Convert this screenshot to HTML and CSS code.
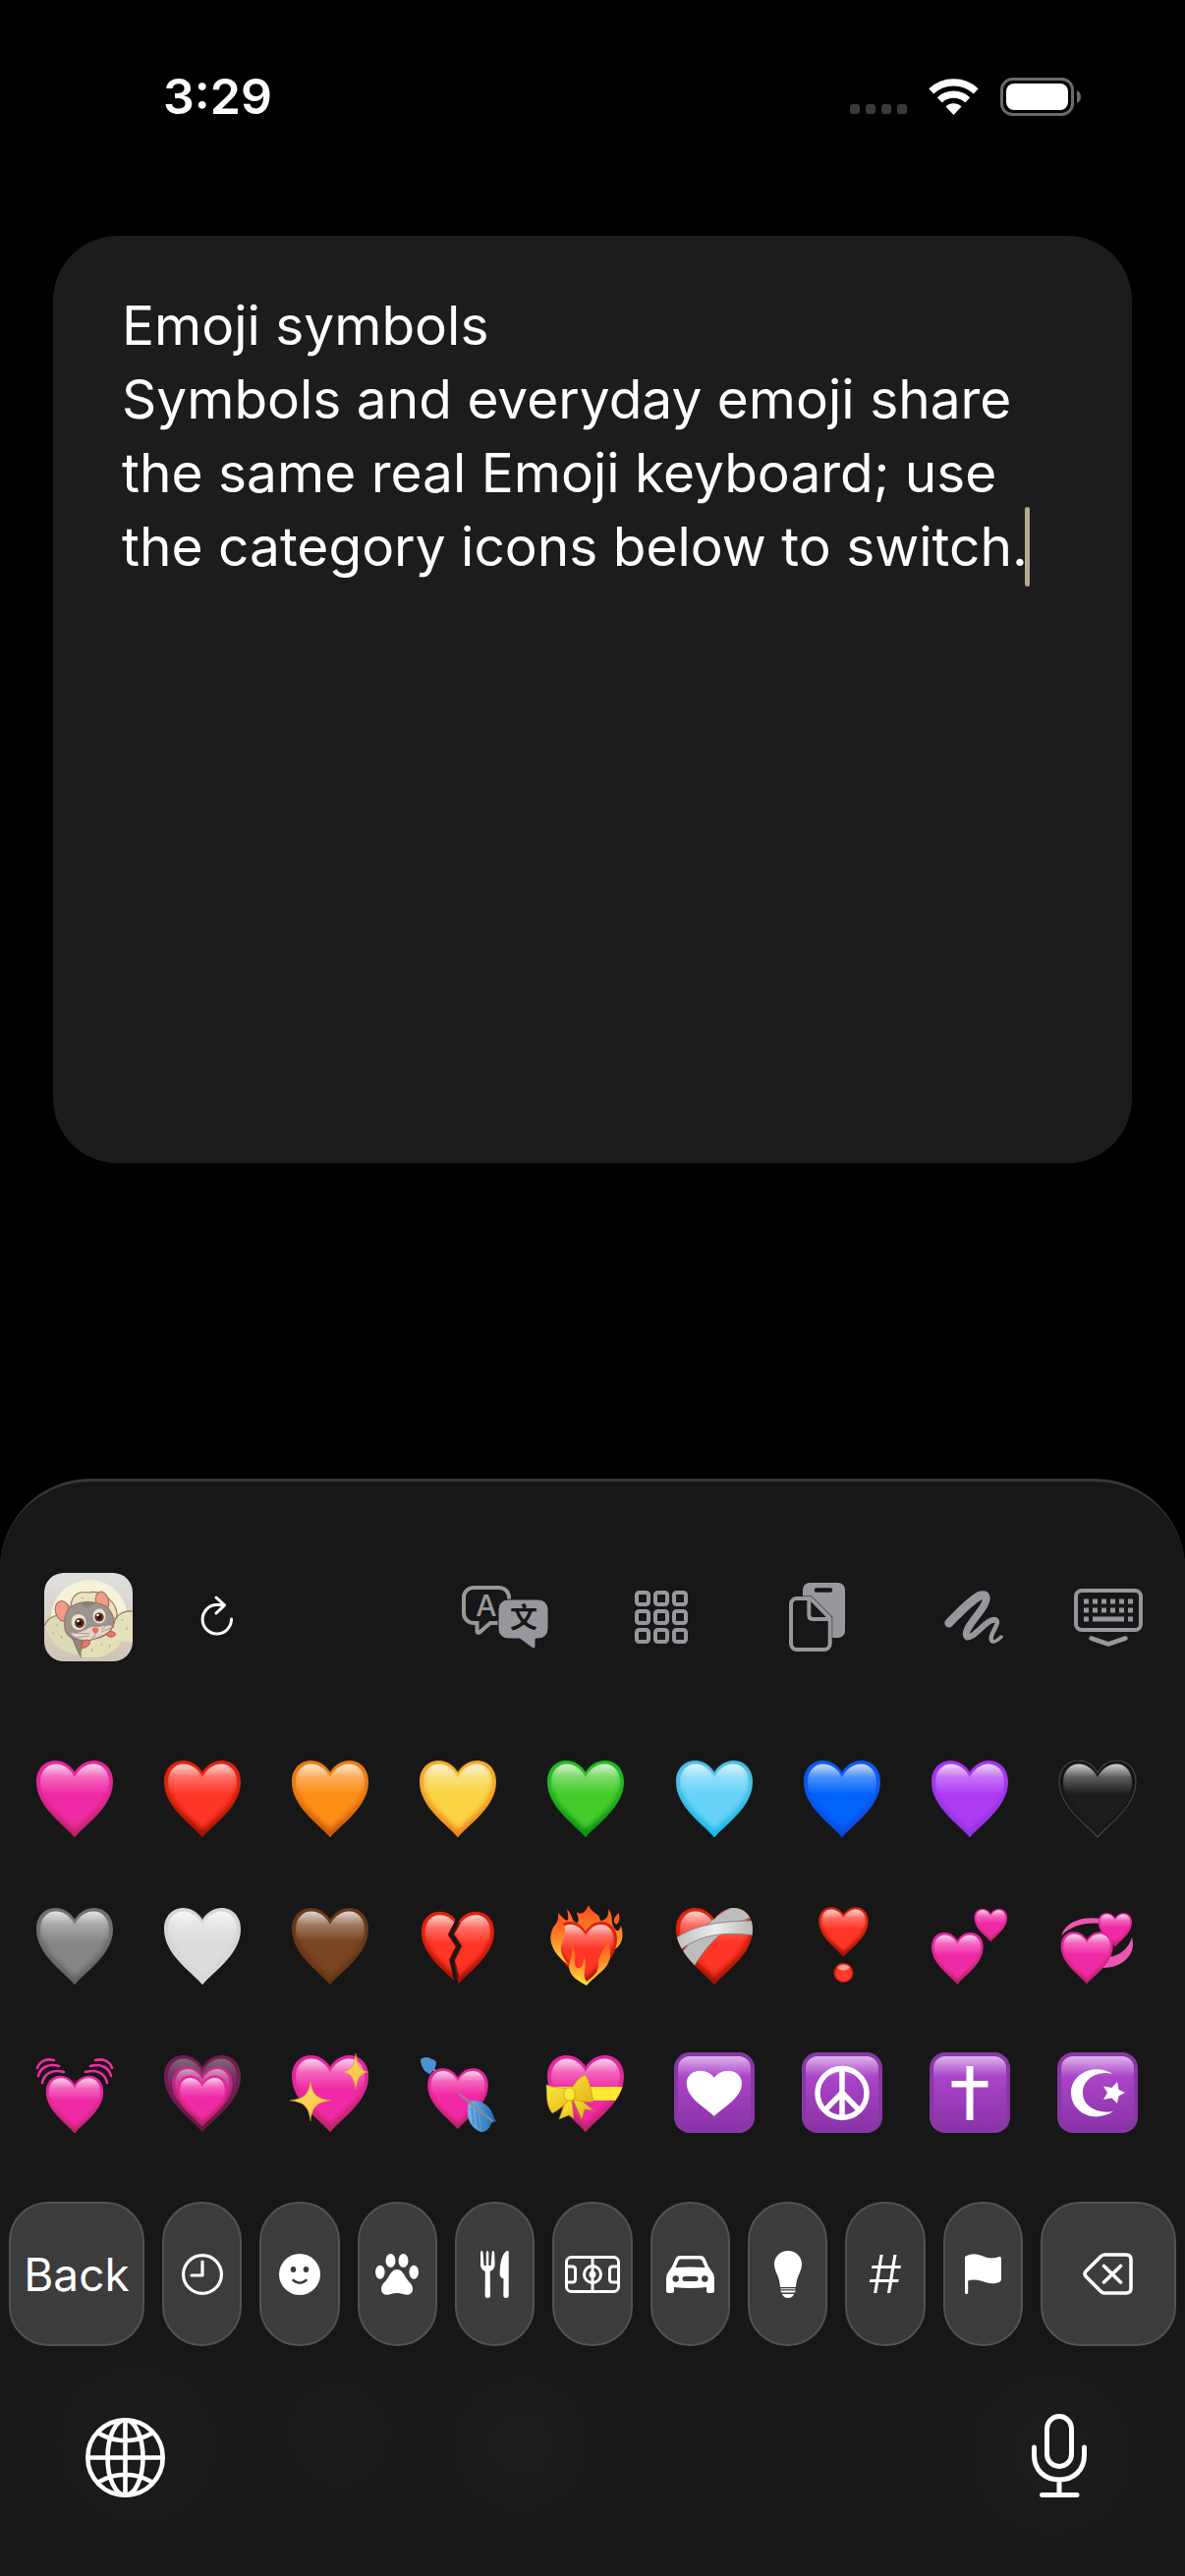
FILE: index.html
```
<!DOCTYPE html>
<html lang="en">
<head>
    <meta charset="UTF-8">
    <meta name="viewport" content="width=device-width, initial-scale=1.0">
    <title>Emoji symbols</title>
    <link rel="stylesheet" href="styles.css">
</head>
<body>
    <!-- Shared emoji shapes -->
    <svg class="defs" aria-hidden="true">
        <defs>
            <linearGradient id="gloss" x1="0" y1="0" x2="0" y2="1">
                <stop offset="0" stop-color="#fff" stop-opacity=".8"/>
                <stop offset=".2" stop-color="#fff" stop-opacity=".28"/>
                <stop offset=".45" stop-color="#fff" stop-opacity="0"/>
            </linearGradient>
            <linearGradient id="fade" x1="0" y1="0" x2="0" y2="1">
                <stop offset=".35" stop-color="#000"/>
                <stop offset="1" stop-color="#fff"/>
            </linearGradient>
            <mask id="lower"><rect width="84" height="84" fill="url(#fade)"/></mask>
            <filter id="soft" x="-10%" y="-10%" width="120%" height="120%"><feGaussianBlur stdDeviation="2.500"/></filter>
            <linearGradient id="tile-fill" x1="0" y1="0" x2="0" y2="1">
                <stop offset="0" stop-color="#dfb4ec"/>
                <stop offset=".12" stop-color="#c883dc"/>
                <stop offset=".28" stop-color="#aa43c8"/>
                <stop offset="1" stop-color="#8a33a8"/>
            </linearGradient>
            <linearGradient id="flame" x1="0" y1="0" x2="0" y2="1">
                <stop offset="0" stop-color="#ff4a1c"/>
                <stop offset=".5" stop-color="#ff8a2a"/>
                <stop offset="1" stop-color="#ffe63c"/>
            </linearGradient>
            <linearGradient id="gold" x1="0" y1="0" x2="1" y2="1">
                <stop offset="0" stop-color="#ffe874"/>
                <stop offset="1" stop-color="#f5b52e"/>
            </linearGradient>
            <linearGradient id="ribbon" x1="0" y1="0" x2="1" y2="1">
                <stop offset="0" stop-color="#fff13a"/>
                <stop offset="1" stop-color="#dfa916"/>
            </linearGradient>
            <linearGradient id="bandage" x1="0" y1="0" x2="1" y2="0">
                <stop offset="0" stop-color="#bdbdbd"/>
                <stop offset=".5" stop-color="#ededed"/>
                <stop offset="1" stop-color="#b4b4b4"/>
            </linearGradient>
            <linearGradient id="feather" x1="0" y1="0" x2="1" y2="0">
                <stop offset="0" stop-color="#7ab8ea"/>
                <stop offset="1" stop-color="#1667b4"/>
            </linearGradient>
            <linearGradient id="avatar-bg" x1="0" y1="0" x2="0" y2="1">
                <stop offset="0" stop-color="#dfe1df"/>
                <stop offset="1" stop-color="#d0c3b4"/>
            </linearGradient>
            <path id="heart-shape" d="M42 82C30 68 3 51 3 25.500C3 13 11 4 22.500 4C31 4 38 9 42 16C46 9 53 4 61.500 4C73 4 81 13 81 25.500C81 51 54 68 42 82Z"/>
            <clipPath id="heart-clip"><use href="#heart-shape"/></clipPath>
        </defs>
        <symbol id="heart" viewBox="0 0 84 84">
            <use href="#heart-shape" class="heart-edge"/>
            <use href="#heart-shape" class="heart-tip" mask="url(#lower)"/>
            <path class="heart-fill" filter="url(#soft)" d="M42 74C30 62 8 48 8 26C8 16 14 9 23 9C31 9 38 13 42 21C46 13 53 9 61 9C70 9 76 16 76 26C76 48 54 62 42 74Z"/>
            <path fill="url(#gloss)" d="M42 76C30 64 7 48 7 26C7 15 13.500 7.500 23 7.500C31 7.500 38 13 42 21C46 13 53 7.500 61 7.500C70.500 7.500 77 15 77 26C77 48 54 64 42 76Z"/>
        </symbol>
        <symbol id="tile" viewBox="0 0 84 84">
            <rect x="1" y="1" width="82" height="82" rx="16" fill="#8738a4"/>
            <rect x="5" y="5" width="74" height="75" rx="12" fill="url(#tile-fill)"/>
        </symbol>
    </svg>

    <header class="status-bar">
        <time class="status-time">3:29</time>
        <div class="status-icons">
            <svg width="58" height="38" viewBox="0 0 58 38" role="img" aria-label="No signal">
                <g fill="#3a3a3a">
                    <rect y="27" width="10" height="10" rx="3"/>
                    <rect x="16" y="27" width="10" height="10" rx="3"/>
                    <rect x="32" y="27" width="10" height="10" rx="3"/>
                    <rect x="48" y="27" width="10" height="10" rx="3"/>
                </g>
            </svg>
            <svg width="51" height="38" viewBox="0 0 51 38" role="img" aria-label="Wi-Fi">
                <g fill="none" stroke="#fff" stroke-width="7.200">
                    <path d="M2.800 13.800A33.200 33.200 0 0 1 48.200 13.800"/>
                    <path d="M11.300 22.800A20.800 20.800 0 0 1 39.700 22.800"/>
                </g>
                <path fill="#fff" d="M25.500 38L17.500 29.500A11.700 11.700 0 0 1 33.500 29.500Z"/>
            </svg>
            <svg width="83" height="39" viewBox="0 0 83 39" role="img" aria-label="Battery full">
                <rect x="1.500" y="1.500" width="72" height="36" rx="11" fill="none" stroke="#6b6b6b" stroke-width="3"/>
                <rect x="6" y="6" width="63" height="27" rx="8" fill="#fff"/>
                <path d="M78 13Q82 15 82 19.500T78 26Z" fill="#6b6b6b"/>
            </svg>
        </div>
    </header>

    <main class="editor">
        <textarea class="editor-text" aria-label="Note" spellcheck="false">Emoji symbols
Symbols and everyday emoji share the same real Emoji keyboard; use the category icons below to switch.</textarea>
        <span class="caret"></span>
    </main>

    <section class="keyboard" aria-label="Emoji keyboard">
        <div class="toolbar">
            <button class="avatar" type="button" aria-label="Profile">
                <svg width="90" height="90" viewBox="0 0 90 90">
                    <rect width="90" height="90" fill="url(#avatar-bg)"/>
                    <circle cx="46" cy="46" r="39" fill="#f6f1d8"/>
                    <g stroke="#9c7263" stroke-width="1.200">
                        <path fill="#e8e4c0" d="M27 34C28 22 35 18 46 20C58 17 76 30 74 46L40 50Z"/>
                        <path fill="#dcdab8" d="M0 54C4 43 14 40 23 46C26 58 28 70 38 84C20 82 8 74 4 62Z" stroke="none"/>
                        <path fill="none" d="M0 54C3 47 8 44 14 43"/>
                        <path fill="#e3e0bd" d="M70 56C71 44 79 38 90 39V70H76Z" stroke="none"/>
                        <path fill="none" d="M70 56C71 44 79 38 90 39"/>
                        <path fill="#8f8782" d="M28 66C32 72 33 80 38 86L46 70Z"/>
                        <ellipse cx="59" cy="29" rx="6.500" ry="10" fill="#f09c88" transform="rotate(-14 59 29)"/>
                        <ellipse cx="19" cy="39" rx="7.500" ry="10.500" fill="#f09c88" transform="rotate(-18 19 39)"/>
                        <path fill="#9b948e" d="M25 36C34 29 46 28 54 31C64 32 70 40 71 50C70 62 58 66 46 69C34 70 23 66 21 57C20 48 21 41 25 36Z"/>
                    </g>
                    <path fill="#8a817a" d="M37 31L43 36L52 31L46 29Z"/>
                    <path fill="#e3d6ca" d="M27 61C38 63 44 55 50 55C58 56 64 52 69 54C67 61 58 65 46 68C38 69 30 66 27 61Z"/>
                    <ellipse cx="35" cy="50" rx="7.500" ry="8" fill="#e9e2cf"/>
                    <ellipse cx="56" cy="44" rx="6.500" ry="7.500" fill="#e9e2cf"/>
                    <circle cx="36" cy="51" r="5" fill="#5d3623"/>
                    <circle cx="56" cy="45" r="4.600" fill="#5d3623"/>
                    <circle cx="36" cy="51" r="2.500" fill="#20120c"/>
                    <circle cx="56" cy="45" r="2.300" fill="#20120c"/>
                    <circle cx="34.500" cy="49" r="1.300" fill="#fff"/>
                    <circle cx="54.500" cy="43" r="1.300" fill="#fff"/>
                    <path fill="#ef6757" d="M48.500 57Q52 54 55.500 57Q55 61 52 62Q49 60 48.500 57Z"/>
                    <path fill="none" stroke="#a5897c" stroke-width=".8" d="M46 62L30 61M46 64L31 66M58 58L68 50M58 60L70 55M52 62Q52 66 48 66"/>
                    <path fill="#e2dfb6" d="M38 86C36 74 46 68 56 67C66 63 74 64 78 70C74 80 60 87 46 86Z"/>
                    <path fill="#e87666" stroke="#a9584c" stroke-width=".8" d="M38 74Q38 69 43 68Q48 69 46 73Q42 77 38 77ZM63 63Q66 58 71 60Q75 64 70 65Q65 66 63 63Z"/>
                    <path stroke="#a9a583" stroke-width="1" d="M48 80l1-3M58 74l1-2M66 76l1-3M12 52l2 2M8 60l2 2M17 64l1 3M38 25l2 1M52 24l2 0M79 47l1 2M84 55l0 3"/>
                </svg>
            </button>
            <button class="refresh" type="button" aria-label="Refresh">
                <svg width="34" height="44" viewBox="0 0 34 44" fill="none" stroke="#fff" stroke-width="3" stroke-linecap="round" stroke-linejoin="round">
                    <path d="M31.500 24A14.700 14.700 0 1 1 16.500 9.600H24M16 2L24.500 9.800L16 18"/>
                </svg>
            </button>
            <div class="tools">
                <button class="tool" type="button" aria-label="Translate">
                    <svg width="88" height="64" viewBox="0 0 88 64">
                        <path d="M38 38H29L18 47.500Q15.500 49 15.500 46V38H12A10 10 0 0 1 2 28V12A10 10 0 0 1 12 2H38A10 10 0 0 1 48 12V20" fill="none" stroke="#98979d" stroke-width="4"/>
                        <text x="25" y="31" class="glyph-latin">A</text>
                        <path d="M47 14H78A10 10 0 0 1 88 24V44A10 10 0 0 1 78 54H75V61Q75 65 71 63L59 54H47A10 10 0 0 1 37 44V24A10 10 0 0 1 47 14Z" fill="#98979d" stroke="#171717"/>
                        <text x="63" y="43" class="glyph-han">文</text>
                    </svg>
                </button>
                <button class="tool" type="button" aria-label="Layouts">
                    <svg width="54" height="54" viewBox="0 0 54 54" fill="none" stroke="#98979d" stroke-width="4">
                        <rect x="2" y="2" width="12" height="12" rx="2.500"/><rect x="21" y="2" width="12" height="12" rx="2.500"/><rect x="40" y="2" width="12" height="12" rx="2.500"/>
                        <rect x="2" y="21" width="12" height="12" rx="2.500"/><rect x="21" y="21" width="12" height="12" rx="2.500"/><rect x="40" y="21" width="12" height="12" rx="2.500"/>
                        <rect x="2" y="40" width="12" height="12" rx="2.500"/><rect x="21" y="40" width="12" height="12" rx="2.500"/><rect x="40" y="40" width="12" height="12" rx="2.500"/>
                    </svg>
                </button>
                <button class="tool" type="button" aria-label="Clipboard">
                    <svg width="57" height="70" viewBox="0 0 57 70">
                        <rect x="14" width="43" height="56" rx="7" fill="#98979d"/>
                        <path d="M28 7.500H42" stroke="#171717" stroke-width="4.400" stroke-linecap="round"/>
                        <path d="M8 16H22L41.700 36V62A6 6 0 0 1 35.700 68H8A6 6 0 0 1 2 62V22A6 6 0 0 1 8 16Z" fill="#171717" stroke="#171717" stroke-width="5"/>
                        <path d="M8 16H22L41.700 36V62A6 6 0 0 1 35.700 68H8A6 6 0 0 1 2 62V22A6 6 0 0 1 8 16ZM20.300 17V33Q20.300 37 24.300 37H41" fill="none" stroke="#98979d" stroke-width="4" stroke-linejoin="round"/>
                    </svg>
                </button>
                <button class="tool" type="button" aria-label="Handwriting">
                    <svg width="60" height="55" viewBox="0 0 60 55" fill="none" stroke="#98979d" stroke-linecap="round" stroke-linejoin="round">
                        <path stroke-width="9" d="M4.800 33C14 24 27 9 37 5"/>
                        <path stroke-width="7.500" d="M37 4.500C44 2 44 8 41 14C36 24 18 41 23.500 46.500"/>
                        <path stroke-width="6" d="M23.500 47C30 50 44 27 52 30"/>
                        <path stroke-width="4.500" d="M52 29.500C59 32 44 46 48.500 51"/>
                        <path stroke-width="3.500" d="M48.500 51.500C51 53 55 50 58 47"/>
                    </svg>
                </button>
                <button class="tool tool-last" type="button" aria-label="Hide keyboard">
                    <svg width="70" height="59" viewBox="0 0 70 59" fill="none" stroke="#98979d">
                        <rect x="2" y="2" width="66" height="40" rx="6" stroke-width="4"/>
                        <path stroke-width="5" stroke-dasharray="5 4" d="M10 13H60M10 22H60"/>
                        <path stroke-width="5" d="M10 31H15M55 31H60M19 31H51"/>
                        <path stroke-width="4.500" stroke-linecap="round" stroke-linejoin="round" d="M17.500 50.500L35 56.500L52.500 50.500"/>
                    </svg>
                </button>
            </div>
        </div>

        <div class="emoji-grid">
            <button class="emoji hot-pink" type="button" aria-label="Pink heart"><svg viewBox="0 0 84 84"><use href="#heart"/></svg></button>
            <button class="emoji red" type="button" aria-label="Red heart"><svg viewBox="0 0 84 84"><use href="#heart"/></svg></button>
            <button class="emoji orange" type="button" aria-label="Orange heart"><svg viewBox="0 0 84 84"><use href="#heart"/></svg></button>
            <button class="emoji yellow" type="button" aria-label="Yellow heart"><svg viewBox="0 0 84 84"><use href="#heart"/></svg></button>
            <button class="emoji green" type="button" aria-label="Green heart"><svg viewBox="0 0 84 84"><use href="#heart"/></svg></button>
            <button class="emoji sky" type="button" aria-label="Light blue heart"><svg viewBox="0 0 84 84"><use href="#heart"/></svg></button>
            <button class="emoji blue" type="button" aria-label="Blue heart"><svg viewBox="0 0 84 84"><use href="#heart"/></svg></button>
            <button class="emoji purple" type="button" aria-label="Purple heart"><svg viewBox="0 0 84 84"><use href="#heart"/></svg></button>
            <button class="emoji black" type="button" aria-label="Black heart"><svg viewBox="0 0 84 84"><use href="#heart"/><use href="#heart-shape" fill="none" stroke="#454443" stroke-width="1.200"/></svg></button>

            <button class="emoji grey" type="button" aria-label="Grey heart"><svg viewBox="0 0 84 84"><use href="#heart"/></svg></button>
            <button class="emoji white" type="button" aria-label="White heart"><svg viewBox="0 0 84 84"><use href="#heart"/></svg></button>
            <button class="emoji brown" type="button" aria-label="Brown heart"><svg viewBox="0 0 84 84"><use href="#heart"/></svg></button>
            <button class="emoji red" type="button" aria-label="Broken heart">
                <svg viewBox="0 0 84 84">
                    <use href="#heart" width="84" height="84" transform="translate(2 4) scale(.95)"/>
                    <path d="M42 18L41 20L35 31L43 43L36 57L41 76" fill="none" stroke="#8e1008" stroke-width="6"/>
                    <path d="M42 5L41 18L35 31L43 43L36 57L41 84" fill="none" stroke="#171717" stroke-width="4"/>
                </svg>
            </button>
            <button class="emoji red" type="button" aria-label="Heart on fire">
                <svg viewBox="0 0 84 84">
                    <path fill="url(#flame)" d="M14 9C24 20 26 20 23 5C30 12 27 19 34 19C36 15 33 11 33 8C38 12 42 8 45 1C49 11 56 8 57 17C63 17 66 12 65 5C71 12 67 17 70 22C74 30 76 28 78 22C82 34 78 42 72 46L24 62C10 50 2 38 9 24C12 20 15 17 14 9Z"/>
                    <path fill="#ff5a20" d="M76 9C71 13 69 17 73 21C78 18 76 14 76 9Z"/>
                    <use href="#heart" width="84" height="84" transform="translate(7.600 14.800) scale(.82)"/>
                    <path fill="url(#flame)" d="M14 12C24 23 22 32 18 40C15 49 19 55 25 62C10 52 3 38 9 26C13 20 15 18 14 12Z"/>
                    <path fill="url(#flame)" d="M27 42C35 50 29 57 32 64C38 68 40 61 40 54C45 63 37 71 43 79C51 73 55 69 55 61C54 53 63 45 64 35C69 48 68 59 61 66C54 73 48 77 43 83C36 79 25 74 25 63C26 55 30 52 27 42Z"/>
                </svg>
            </button>
            <button class="emoji red" type="button" aria-label="Mending heart">
                <svg viewBox="0 0 84 84">
                    <use href="#heart"/>
                    <g clip-path="url(#heart-clip)">
                        <path fill="#bdbdbd" stroke="#777" stroke-width=".8" d="M10 48C30 24 48 6 64 2L86 13C60 16 38 36 21 64Z"/>
                        <path fill="url(#bandage)" stroke="#777" stroke-width=".8" d="M2 35C22 21 50 17 84 17V32C50 28 30 31 8 46Z"/>
                    </g>
                </svg>
            </button>
            <button class="emoji red" type="button" aria-label="Heart exclamation">
                <svg viewBox="0 0 84 84">
                    <use href="#heart" width="84" height="84" transform="translate(16.400 .700) scale(.645)"/>
                    <circle cx="43.500" cy="70" r="10" fill="#d81c0c"/>
                    <circle cx="43.500" cy="70.500" r="8" fill="#ff3b2c"/>
                    <ellipse cx="43.500" cy="64.500" rx="6" ry="3" fill="#fff" opacity=".5"/>
                </svg>
            </button>
            <button class="emoji hot-pink" type="button" aria-label="Two hearts">
                <svg viewBox="0 0 84 84">
                    <use href="#heart" width="84" height="84" transform="translate(1 26.400) scale(.675)"/>
                    <use href="#heart" width="84" height="84" transform="translate(45.200 3) scale(.43)"/>
                </svg>
            </button>
            <button class="emoji hot-pink" type="button" aria-label="Revolving hearts">
                <svg viewBox="0 0 84 84">
                    <path fill="#ec55b4" d="M5 32C10 17 28 12 46 15V20C30 18 16 22 5 32ZM77 34C82 50 68 66 46 65L54 54C66 52 74 44 77 34Z"/>
                    <use href="#heart" width="84" height="84" transform="translate(41.400 7.300) scale(.44)"/>
                    <use href="#heart" width="84" height="84" transform="translate(2.600 25.500) scale(.68)"/>
                </svg>
            </button>

            <button class="emoji hot-pink" type="button" aria-label="Beating heart">
                <svg viewBox="0 0 84 84">
                    <use href="#heart" width="84" height="84" transform="translate(10.500 21.700) scale(.75)"/>
                    <path fill="none" stroke="#f02ca4" stroke-width="2.600" stroke-linecap="round" d="M4 17C6 10 13 7 21 9M5 25C7 16 16 12 26 15M9 32C11 22 20 18 31 21M80 17C78 10 71 7 63 9M79 25C77 16 68 12 58 15M75 32C73 22 64 18 53 21"/>
                </svg>
            </button>
            <button class="emoji hot-pink" type="button" aria-label="Growing heart">
                <svg viewBox="0 0 84 84">
                    <use href="#heart" opacity=".45"/>
                    <use href="#heart" width="84" height="84" transform="translate(8.800 12) scale(.79)" opacity=".65"/>
                    <use href="#heart" width="84" height="84" transform="translate(14.700 22) scale(.65)"/>
                </svg>
            </button>
            <button class="emoji hot-pink" type="button" aria-label="Sparkling heart">
                <svg viewBox="0 0 84 84">
                    <use href="#heart"/>
                    <path fill="url(#gold)" stroke="#c9853a" stroke-width=".5" d="M22 30C24 44 28 48 43 50C28 52 24 56 22 71C20 56 16 52 1 50C16 48 20 44 22 30ZM68 2C70 15 72 19 81 21C72 23 70 27 68 39C66 27 64 23 55 21C64 19 66 15 68 2Z"/>
                </svg>
            </button>
            <button class="emoji hot-pink" type="button" aria-label="Heart with arrow">
                <svg viewBox="0 0 84 84">
                    <path stroke="#8b8b90" stroke-width="2.500" d="M12 13L24 25"/>
                    <path fill="#4b92d4" d="M4 8C9 5 13 6 15 8C20 8 21 12 19 16L14 23C9 22 4 16 4 8Z"/>
                    <use href="#heart" width="84" height="84" transform="translate(8.800 14) scale(.79)"/>
                    <path fill="url(#feather)" d="M53 51C66 48 76 56 79 68L81 71L76 73C74 80 68 84 63 81C54 76 50 68 53 51Z"/>
                    <path fill="none" stroke="#8b8b90" stroke-width="2" d="M43 43L77 71"/>
                    <path fill="none" stroke="#3c82c4" d="M56 57L58 75M61 61L63 79M66 65L68 79"/>
                </svg>
            </button>
            <button class="emoji hot-pink" type="button" aria-label="Heart with ribbon">
                <svg viewBox="0 0 84 84">
                    <use href="#heart"/>
                    <path fill="#ffe92e" clip-path="url(#heart-clip)" d="M0 36H84V50H0Z"/>
                    <path fill="url(#ribbon)" stroke="#b98a10" stroke-width=".6" d="M22 49L15 69L25 65L30 68L28 50ZM29 49L38 69L41 59L50 60L34 47Z"/>
                    <path fill="url(#ribbon)" stroke="#b98a10" stroke-width=".6" d="M25 38C17 37 9 37 2 34C3 44 1 54 8 63C15 60 20 54 26 49ZM27 38C31 33 35 26 42 24C47 33 48 42 50 51C43 52 36 51 29 49Z"/>
                    <rect x="20" y="37" width="11" height="13" rx="5" fill="#ffe935" stroke="#b98a10" stroke-width=".6"/>
                </svg>
            </button>
            <button class="emoji" type="button" aria-label="Heart decoration">
                <svg viewBox="0 0 84 84">
                    <use href="#tile"/>
                    <use href="#heart-shape" fill="#fff" transform="translate(11.600 17.500) scale(.72 .59)"/>
                </svg>
            </button>
            <button class="emoji" type="button" aria-label="Peace symbol">
                <svg viewBox="0 0 84 84">
                    <use href="#tile"/>
                    <g fill="none" stroke="#fff" stroke-width="5.500"><circle cx="42" cy="42.500" r="25"/><path d="M42 18V67M42 42L24.500 60M42 42L59.500 60"/></g>
                </svg>
            </button>
            <button class="emoji" type="button" aria-label="Latin cross">
                <svg viewBox="0 0 84 84">
                    <use href="#tile"/>
                    <path fill="#fff" d="M38.500 15H45.500V30H60.500V36.500H45.500V70H38.500V36.500H23.500V30H38.500Z"/>
                </svg>
            </button>
            <button class="emoji" type="button" aria-label="Star and crescent">
                <svg viewBox="0 0 84 84">
                    <use href="#tile"/>
                    <path fill="#fff" d="M58 23C38 11 15 23 15 42C15 62 38 74 58 61C42 64 27 56 27 42C27 28 42 19 58 23Z"/>
                    <path fill="#fff" d="M62 31L63.500 39L70 42L63.500 45.500L62 53L56.500 47.500L48 49L52 42L48 35.500L56.500 37Z"/>
                </svg>
            </button>
        </div>

        <nav class="categories" aria-label="Categories">
            <button class="key key-wide" type="button">Back</button>
            <button class="key" type="button" aria-label="Recent">
                <svg width="42" height="42" viewBox="0 0 42 42" fill="none" stroke="#fff" stroke-width="3.200"><circle cx="21" cy="21" r="19.400"/><path stroke-linecap="round" stroke-linejoin="round" d="M21 8V22H10"/></svg>
            </button>
            <button class="key" type="button" aria-label="Smileys">
                <svg width="42" height="42" viewBox="0 0 42 42"><circle cx="21" cy="21" r="21" fill="#fff"/><ellipse cx="14.500" cy="16" rx="2.800" ry="3" fill="#3c3c3c"/><ellipse cx="27.500" cy="16" rx="2.800" ry="3" fill="#3c3c3c"/><path d="M14.500 27Q21 32.500 27.500 27" fill="none" stroke="#3c3c3c" stroke-width="2.600" stroke-linecap="round"/></svg>
            </button>
            <button class="key" type="button" aria-label="Animals">
                <svg width="44" height="42" viewBox="0 0 44 42" fill="#fff"><ellipse cx="15.500" cy="7" rx="5" ry="7"/><ellipse cx="28.500" cy="7" rx="5" ry="7"/><ellipse cx="4.800" cy="18.700" rx="4.800" ry="7"/><ellipse cx="39.200" cy="18.700" rx="4.800" ry="7"/><path d="M22 16C28 16 29 22 33 27C37 31 38 33 38 36C38 41 33 43 28 41C24 39.500 20 39.500 16 41C11 43 6 41 6 36C6 33 7 31 11 27C15 22 16 16 22 16Z"/></svg>
            </button>
            <button class="key" type="button" aria-label="Food">
                <svg width="29" height="48" viewBox="0 0 29 48" fill="#fff"><path d="M0 2Q0 0 1.300 0T2.600 2L3.500 15H5.800V2Q5.800 0 7 0T8.300 2V15H10.600L11.600 2Q11.600 0 12.900 0T14.200 2L14.600 14Q14.600 19 9.700 21L10 45.500Q10 48 7.300 48T4.600 45.500L4.800 21Q0 19 0 14ZM28.700 1V45.500Q28.700 48 26 48T23.300 45.500L23.500 28.500Q19.500 27 19.600 23C20 14 21 4 26.500 .3Q28.700 -.500 28.700 1Z"/></svg>
            </button>
            <button class="key" type="button" aria-label="Activities">
                <svg width="56" height="38" viewBox="0 0 56 38" fill="none" stroke="#fff" stroke-width="3"><rect x="1.500" y="1.500" width="53" height="35" rx="5"/><path d="M28 2V36M2 11H7.500Q10.500 11 10.500 14V24Q10.500 27 7.500 27H2M54 11H48.500Q45.500 11 45.500 14V24Q45.500 27 48.500 27H54"/><circle cx="28" cy="19" r="8.500"/><circle cx="28" cy="19" r="2" fill="#fff"/></svg>
            </button>
            <button class="key" type="button" aria-label="Travel">
                <svg width="49" height="38" viewBox="0 0 49 38"><path fill="#fff" d="M6 11L9 4Q10.500 0 14 0H35Q38.500 0 40 4L43 11L46.500 16Q49 19 49 23V35.500Q49 38 46.500 38H43.500Q41 38 41 35.500V32Q24 34 8 32V35.500Q8 38 5.500 38H2.500Q0 38 0 35.500V23Q0 19 2.500 16Z"/><path fill="#3c3c3c" d="M9.500 12L12.500 5Q13 3.500 15 3.500H34Q36 3.500 36.500 5L39.500 12Q25 11 9.500 12Z"/><circle cx="9.700" cy="23.500" r="3.200" fill="#3c3c3c"/><circle cx="39.300" cy="23.500" r="3.200" fill="#3c3c3c"/><rect x="16.500" y="21" width="16" height="5" rx="2.500" fill="#3c3c3c"/></svg>
            </button>
            <button class="key" type="button" aria-label="Objects">
                <svg width="28" height="48" viewBox="0 0 28 48" fill="#fff"><path d="M14 0C22 0 28 6 28 13.500C28 22 22.500 25 22 37H6C5.500 25 0 22 0 13.500C0 6 6 0 14 0ZM6.500 38.200H21.500V39.200H6.500ZM6.300 40.500H21.700Q21.500 42.600 20 42.600H8Q6.500 42.600 6.300 40.500ZM8 44H20Q18.500 48 14 48T8 44Z"/></svg>
            </button>
            <button class="key key-symbols" type="button" aria-label="Symbols" aria-pressed="true">#</button>
            <button class="key" type="button" aria-label="Flags">
                <svg width="37" height="41" viewBox="0 0 37 41" fill="#fff"><path d="M0 3C9 -3 17 2 23 4C28 5 32 4 35 3Q37 2.500 37 5V26Q37 28 35 29C27 32 21 29 16 27.500C11 26 7 26 3.200 27.500V39.500Q3.200 41 1.600 41T0 39.500Z"/></svg>
            </button>
            <button class="key key-wide" type="button" aria-label="Delete">
                <svg width="51" height="43" viewBox="0 0 51 43" fill="none" stroke="#fff" stroke-width="3.600" stroke-linecap="round" stroke-linejoin="round"><path d="M22 2H44Q49 2 49 7V36Q49 41 44 41H22Q20 41 18 39L3 24Q1 21.500 3 19L18 4Q20 2 22 2ZM21.500 13.500L38.500 30M38.500 13.500L21.500 30"/></svg>
            </button>
        </nav>

        <footer class="dock">
            <button class="dock-button" type="button" aria-label="Next keyboard">
                <svg width="81" height="81" viewBox="0 0 81 81" fill="none" stroke="#fff" stroke-width="4.600"><circle cx="40.500" cy="40.500" r="38.200"/><ellipse cx="40.500" cy="40.500" rx="18" ry="38.200"/><path d="M40.500 2V79M2 40.500H79M13 15.500Q40.500 31 68 15.500M13 65.500Q40.500 50 68 65.500"/></svg>
            </button>
            <button class="dock-button" type="button" aria-label="Dictate">
                <svg width="56" height="89" viewBox="0 0 56 89" fill="none" stroke="#fff" stroke-width="5" stroke-linecap="round"><rect x="15.500" y="2.500" width="25" height="51" rx="12.500"/><path d="M2.500 34V42C2.500 57 13 67 28 67S53.500 57 53.500 42V34M28 67V82M10.500 82.500H46"/></svg>
            </button>
        </footer>
    </section>
</body>
</html>
```

FILE: styles.css
```
* {
    box-sizing: border-box;
}
body {
    margin: 0;
    min-height: 100vh;
    display: flex;
    flex-direction: column;
    background-color: #000;
    color: #fff;
    font-family: Inter, "Noto Sans CJK SC", sans-serif;
}
svg {
    display: block;
}
button {
    margin: 0;
    padding: 0;
    border: none;
    background: none;
    color: inherit;
    font: inherit;
    cursor: pointer;
    display: flex;
    align-items: center;
    justify-content: center;
}
.defs {
    position: absolute;
    width: 0;
    height: 0;
}

/* Status bar */
.status-bar {
    display: flex;
    justify-content: space-between;
    align-items: center;
    padding: 66px 105px 110px 166px;
}
.status-time {
    font-size: 50px;
    font-weight: 600;
    line-height: 64px;
}
.status-icons {
    display: flex;
    align-items: center;
    gap: 22px;
}

/* Text field */
.editor {
    position: relative;
    height: 36vh;
    margin: 0 54px;
    border-radius: 66px;
    background-color: #1c1c1e;
}
.editor-text {
    display: block;
    width: 100%;
    height: 100%;
    padding: 54px 60px 54px 70px;
    border: none;
    outline: none;
    resize: none;
    overflow: hidden;
    background: none;
    color: #fff;
    font-family: inherit;
    font-size: 55px;
    line-height: 75px;
}
.caret {
    position: absolute;
    left: 989px;
    top: 276px;
    width: 5px;
    height: 81px;
    border-radius: 3px;
    background-color: #b5a792;
}

/* Keyboard */
.keyboard {
    margin-top: auto;
    padding-top: 93px;
    border-top: 3px solid #363637;
    border-radius: 92px 92px 0 0;
    background-color: #171717;
}
.toolbar {
    display: flex;
    align-items: center;
    height: 90px;
    padding: 0 20px 0 45px;
    margin-bottom: 97px;
}
.avatar {
    border-radius: 20px;
    overflow: hidden;
}
.refresh {
    margin-left: 69px;
}
.tools {
    display: flex;
    margin-left: auto;
}
.tool {
    width: 159px;
    height: 90px;
}
.tool-last {
    width: 116px;
}
.glyph-latin {
    font-size: 30px;
    font-weight: 500;
    text-anchor: middle;
    fill: #98979d;
}
.glyph-han {
    font-family: "Noto Sans CJK SC", sans-serif;
    font-size: 28px;
    font-weight: 700;
    text-anchor: middle;
    fill: #171717;
}

/* Emoji */
.emoji-grid {
    display: grid;
    grid-template-columns: repeat(9, 1fr);
    row-gap: 66px;
    padding: 0 24px 0 11px;
    margin-bottom: 69px;
}
.emoji svg {
    width: 84px;
    height: 84px;
}
.heart-edge {
    fill: var(--edge);
}
.heart-tip {
    fill: var(--tip);
}
.heart-fill {
    fill: var(--fill);
}
.hot-pink {
    --edge: #e3269b;
    --fill: #f02ba6;
    --tip: #b9235f;
}
.red {
    --edge: #dc200c;
    --fill: #ff3626;
    --tip: #9c1204;
}
.orange {
    --edge: #ea7a10;
    --fill: #fc8e18;
    --tip: #c9540c;
}
.yellow {
    --edge: #f5a424;
    --fill: #fad442;
    --tip: #ee8420;
}
.green {
    --edge: #1fb822;
    --fill: #44cc2a;
    --tip: #0b8a16;
}
.sky {
    --edge: #45bede;
    --fill: #67d3f8;
    --tip: #12b8ee;
}
.blue {
    --edge: #0b58f0;
    --fill: #0464fa;
    --tip: #0c48e0;
}
.purple {
    --edge: #9f35ec;
    --fill: #b03af4;
    --tip: #8c34dc;
}
.black {
    --edge: #161616;
    --fill: #1e1e1e;
    --tip: #1b1b1b;
}
.grey {
    --edge: #6e6e6e;
    --fill: #868686;
    --tip: #606060;
}
.white {
    --edge: #d4d4d6;
    --fill: #dcdcdc;
    --tip: #d8d8d8;
}
.brown {
    --edge: #66361a;
    --fill: #7a4520;
    --tip: #663614;
}

/* Category keys */
.categories {
    display: flex;
    gap: 18px;
    padding: 0 9px;
}
.key {
    flex: 1;
    height: 147px;
    border: 2px solid #525252;
    border-radius: 40px;
    background-color: #3c3c3c;
}
.key-wide {
    flex: 0 0 138px;
    font-size: 46px;
}
.key-symbols {
    background-color: #383838;
    font-size: 54px;
    font-weight: 300;
}

/* Bottom bar */
.dock {
    display: flex;
    justify-content: space-between;
    align-items: center;
    padding: 69px 100px 76px 87px;
    background:
        radial-gradient(circle at 140px 100px, #1c1c1e, transparent 130px),
        radial-gradient(circle at 345px 90px, #1b1b1d, transparent 100px),
        radial-gradient(circle at 530px 100px, #1d1d1d, transparent 100px),
        radial-gradient(circle at 1070px 110px, #1d1d1f, transparent 120px);
}
```
